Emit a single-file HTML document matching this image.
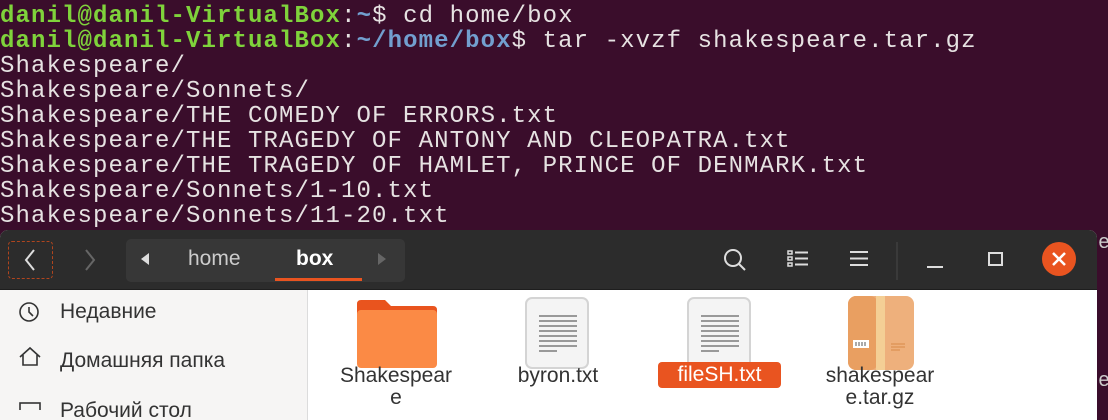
<!DOCTYPE html>
<html><head><meta charset="utf-8"><style>
*{margin:0;padding:0;box-sizing:border-box}
body{width:1108px;height:410px;overflow:hidden;background:#3a0d2b;position:relative;font-family:"Liberation Sans","DejaVu Sans",sans-serif}
.term{position:absolute;left:0;top:4px;font-family:"Liberation Mono","DejaVu Sans Mono",monospace;font-size:24px;letter-spacing:1.1px;line-height:25px;color:#e6e2e2;white-space:pre}
.g{color:#7fd33b;font-weight:bold}.b{color:#729fcf;font-weight:bold}
.win{position:absolute;left:0;top:230px;width:1097px;height:190px;background:#fff;border-radius:8px 8px 0 0;overflow:hidden}
.hdr{position:absolute;left:0;top:0;width:100%;height:60px;background:#2c2c2c;border-bottom:1px solid #1e1e1e}
.side{position:absolute;left:0;top:60px;width:308px;height:140px;background:#f6f5f4;border-right:1px solid #dcdcdc}
.abs{position:absolute}
.si{position:absolute;left:60px;font-size:21px;color:#333}
.lbl{position:absolute;font-size:21px;color:#333;text-align:center;line-height:22px}
.doc{position:absolute;width:64px;height:72px;background:#f4f4f4;border:2px solid #d4d4d4;border-radius:7px}
.doc i{position:absolute;left:12px;height:1.5px;background:#999;width:38px}
</style></head><body>
<div class="term"><span class="g">danil@danil-VirtualBox</span>:<span class="b">~</span>$ cd home/box
<span class="g">danil@danil-VirtualBox</span>:<span class="b">~/home/box</span>$ tar -xvzf shakespeare.tar.gz
Shakespeare/
Shakespeare/Sonnets/
Shakespeare/THE COMEDY OF ERRORS.txt
Shakespeare/THE TRAGEDY OF ANTONY AND CLEOPATRA.txt
Shakespeare/THE TRAGEDY OF HAMLET, PRINCE OF DENMARK.txt
Shakespeare/Sonnets/1-10.txt
Shakespeare/Sonnets/11-20.txt</div>
<div class="abs" style="left:1098px;top:232px;color:#ccc;font:20px 'Liberation Mono',monospace">e<br><br><br><br><br><br>e</div>
<div class="win">
<div class="hdr">
 <div class="abs" style="left:8px;top:11px;width:45px;height:38px;border:1.5px dashed #b0451e;border-radius:4px"></div>
 <svg class="abs" style="left:0;top:0" width="420" height="60"><path d="M34 20 L26 30 L34 40" stroke="#ddd" stroke-width="2" fill="none"/><path d="M86 20 L94 30 L86 40" stroke="#666" stroke-width="2" fill="none"/></svg>
 <div class="abs" style="left:126px;top:9px;width:279px;height:43px;background:#373737;border-radius:5px"></div>
 <svg class="abs" style="left:0;top:0" width="420" height="60"><path d="M149 23 L141 29 L149 35Z" fill="#ddd"/><path d="M378 23 L386 29 L378 35Z" fill="#666"/><rect x="275" y="48" width="87" height="3" fill="#e95420"/></svg>
 <div class="abs" style="left:188px;top:17px;font-size:21px;color:#ccc">home</div>
 <div class="abs" style="left:296px;top:17px;font-size:21px;color:#fff;font-weight:bold">box</div>
 <svg class="abs" style="left:700px;top:0" width="397" height="60" fill="none" stroke="#ddd" stroke-width="2">
  <circle cx="33" cy="28" r="8"/><path d="M39 34 L45 40"/>
  <rect x="88" y="21" width="4" height="3" stroke-width="1.5"/><rect x="88" y="27" width="4" height="3" stroke-width="1.5"/><rect x="88" y="33" width="4" height="3" stroke-width="1.5"/><path d="M95 22.5H108M95 28.5H108M95 34.5H108"/>
  <path d="M150 22H168M150 28.5H168M150 35H168"/>
  <path d="M197 12V50" stroke="#3a3a3a"/>
  <path d="M227 37H243"/>
  <rect x="289" y="23" width="13" height="12"/>
  <circle cx="359" cy="29" r="17" fill="#e95420" stroke="none"/><path d="M353 23L365 35M365 23L353 35" stroke="#fff" stroke-width="2.5"/>
 </svg>
</div>
<div class="side">
 <svg class="abs" style="left:17px;top:10px" width="28" height="110" fill="none" stroke="#333" stroke-width="1.6"><circle cx="12" cy="12" r="9"/><path d="M12 7V12L16 16"/><path d="M3 57L13 48L23 57M6 55V65H20V55"/><rect x="3" y="103" width="20" height="14"/></svg>
 <div class="si" style="top:10px">Недавние</div>
 <div class="si" style="top:59px">Домашняя папка</div>
 <div class="si" style="top:109px">Рабочий стол</div>
</div>
<svg class="abs" style="left:355px;top:68px" width="84" height="72"><path d="M2 6Q2 2 6 2H30L36 8H78Q82 8 82 12V20H2Z" fill="#e9541e"/><rect x="2" y="12" width="80" height="58" rx="4" fill="#fb8a45"/></svg>
<div class="lbl" style="left:326px;top:135px;width:140px">Shakespear<br>e</div>
<div class="doc" style="left:525px;top:67px"><i style="top:16px"></i><i style="top:21px"></i><i style="top:26px"></i><i style="top:31px"></i><i style="top:36px"></i><i style="top:41px"></i><i style="top:46px"></i><i style="top:51px;width:18px"></i></div>
<div class="lbl" style="left:490px;top:135px;width:136px">byron.txt</div>
<div class="doc" style="left:687px;top:67px"><i style="top:16px"></i><i style="top:21px"></i><i style="top:26px"></i><i style="top:31px"></i><i style="top:36px"></i><i style="top:41px"></i><i style="top:46px"></i><i style="top:51px;width:18px"></i></div>
<div class="lbl" style="left:658px;top:132px;width:123px;height:26px;background:#e95420;color:#fff;border-radius:4px;line-height:26px">fileSH.txt</div>
<svg class="abs" style="left:848px;top:66px" width="66" height="76"><rect x="0" y="0" width="66" height="74" rx="8" fill="#eeb07c"/><rect x="0" y="0" width="30" height="74" rx="8" fill="#e99f61"/><rect x="28" y="0" width="9" height="74" fill="#f4cf95"/><rect x="5" y="44" width="16" height="8" fill="#fff"/><path d="M8 46V50M11 46V50M14 46V50M17 46V50" stroke="#555"/><path d="M43 48H57M43 51H57M43 54H52" stroke="#d88a48"/></svg>
<div class="lbl" style="left:805px;top:135px;width:150px">shakespear<br>e.tar.gz</div>
</div>
</body></html>
